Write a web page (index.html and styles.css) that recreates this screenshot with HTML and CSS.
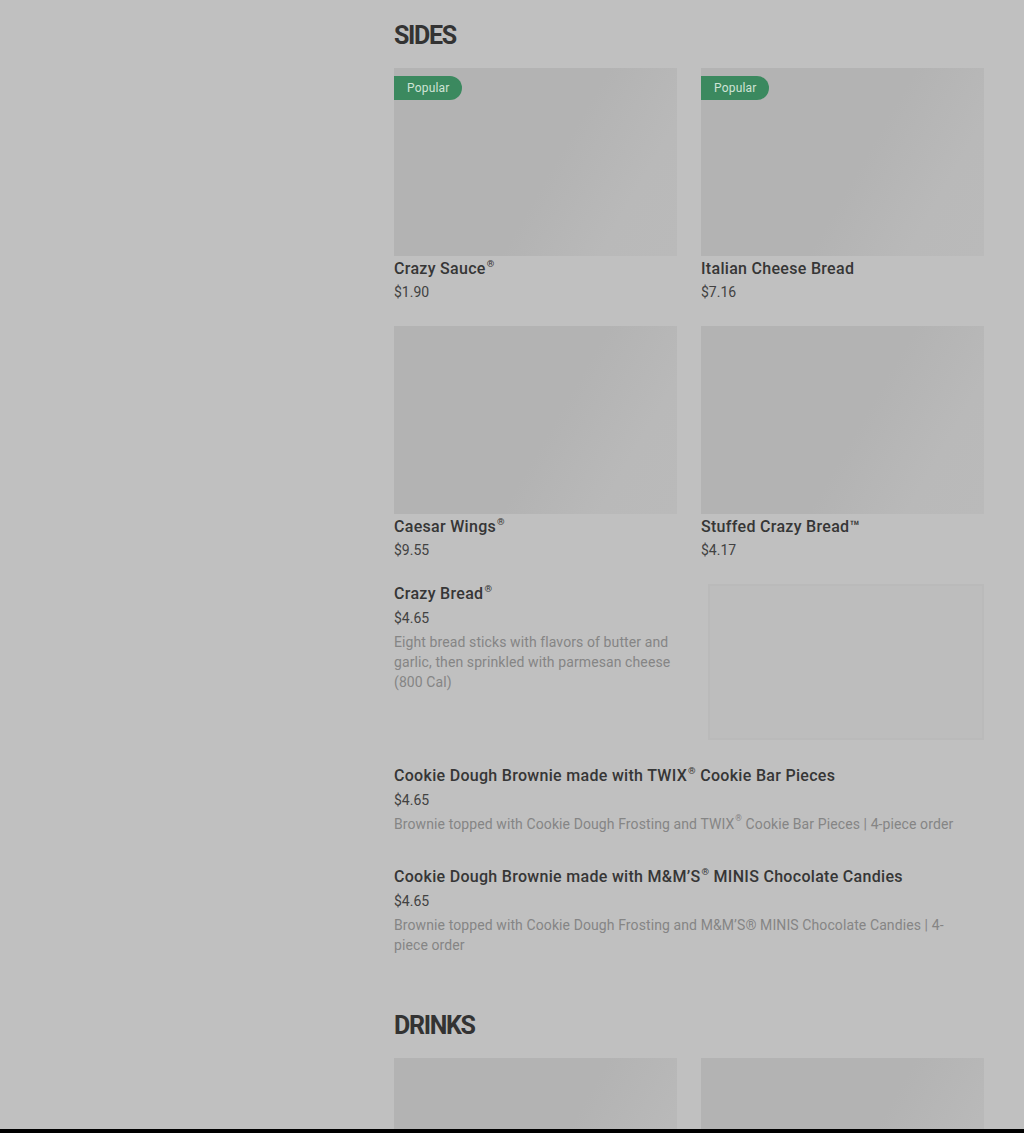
FILE: index.html
```html
<!DOCTYPE html>
<html lang="en">

<head>
    <meta charset="UTF-8">
    <meta name="viewport" content="width=device-width, initial-scale=1">
    <title>Menu</title>
    <link rel="stylesheet" href="styles.css">
</head>

<body>
    <div class="page">
        <main class="menu">

            <!-- Sides -->
            <section class="section">
                <h2 class="section-title">SIDES</h2>
                <div class="grid">
                    <div class="card">
                        <div class="thumb"><span class="badge">Popular</span></div>
                        <div class="item-name">Crazy Sauce<span class="reg">®</span></div>
                        <div class="item-price">$1.90</div>
                    </div>
                    <div class="card">
                        <div class="thumb"><span class="badge">Popular</span></div>
                        <div class="item-name">Italian Cheese Bread</div>
                        <div class="item-price">$7.16</div>
                    </div>
                    <div class="card">
                        <div class="thumb"></div>
                        <div class="item-name">Caesar Wings<span class="reg">®</span></div>
                        <div class="item-price">$9.55</div>
                    </div>
                    <div class="card">
                        <div class="thumb"></div>
                        <div class="item-name">Stuffed Crazy Bread™</div>
                        <div class="item-price">$4.17</div>
                    </div>
                </div>

                <div class="list">
                    <div class="row">
                        <div class="row-text">
                            <div class="item-name">Crazy Bread<span class="reg">®</span></div>
                            <div class="item-price row-price">$4.65</div>
                            <p class="item-desc">Eight bread sticks with flavors of butter and garlic, then sprinkled with parmesan cheese (800 Cal)</p>
                        </div>
                        <div class="row-thumb"></div>
                    </div>
                    <div class="row">
                        <div class="row-text text-only">
                            <div class="item-name">Cookie Dough Brownie made with TWIX<span class="reg">®</span> Cookie Bar Pieces</div>
                            <div class="item-price row-price">$4.65</div>
                            <p class="item-desc">Brownie topped with Cookie Dough Frosting and TWIX<span class="reg">®</span> Cookie Bar Pieces | 4-piece order</p>
                        </div>
                    </div>
                    <div class="row">
                        <div class="row-text text-only">
                            <div class="item-name">Cookie Dough Brownie made with M&amp;M’S<span class="reg">®</span> MINIS Chocolate Candies</div>
                            <div class="item-price row-price">$4.65</div>
                            <p class="item-desc">Brownie topped with Cookie Dough Frosting and M&amp;M’S® MINIS Chocolate Candies | 4-piece order</p>
                        </div>
                    </div>
                </div>
            </section>

            <!-- Drinks -->
            <section class="section">
                <h2 class="section-title">DRINKS</h2>
                <div class="grid">
                    <div class="card">
                        <div class="thumb"></div>
                    </div>
                    <div class="card">
                        <div class="thumb"></div>
                    </div>
                </div>
            </section>

        </main>
    </div>
</body>

</html>
```

FILE: styles.css
```css
* {
    margin: 0;
    padding: 0;
    box-sizing: border-box;
}

body {
    font-family: Roboto, "Liberation Sans", sans-serif;
    background: #000000;
    color: #333333;
}

.page {
    height: 1129px;
    overflow: hidden;
    background: #c0c0c0;
}

.menu {
    width: 590px;
    margin-left: 394px;
    display: flex;
    flex-direction: column;
    gap: 28px;
}

.section-title {
    font-size: 25px;
    line-height: 32px;
    font-weight: 700;
    letter-spacing: -1.3px;
    color: #333333;
    padding-top: 20px;
    margin-bottom: 16px;
}

.grid {
    display: grid;
    grid-template-columns: 1fr 1fr;
    column-gap: 24px;
    row-gap: 24px;
}

.thumb {
    position: relative;
    height: 188px;
    background: linear-gradient(120deg, #b3b3b3 55%, #b9b9b9 80%, #bababa);
    margin-bottom: 3px;
}

.badge {
    position: absolute;
    top: 8px;
    left: 0;
    height: 24px;
    padding: 0 12px 0 13px;
    display: flex;
    align-items: center;
    font-size: 12px;
    letter-spacing: 0.2px;
    color: #cfe3d6;
    background: #3b895f;
    border-radius: 0 12px 12px 0;
}

.item-name {
    font-size: 16px;
    line-height: 20px;
    font-weight: 500;
    letter-spacing: 0.3px;
    color: #363636;
}

.reg {
    font-size: 0.6em;
    line-height: 1;
    vertical-align: top;
    margin-left: 1px;
}

.item-price {
    font-size: 14px;
    line-height: 20px;
    color: #424242;
    margin-top: 3px;
}

.row-price {
    margin-top: 4px;
}

.list {
    margin-top: 24px;
    display: flex;
    flex-direction: column;
    gap: 26px;
}

.row {
    display: flex;
    gap: 24px;
}

.row-text {
    flex: 1;
    padding-bottom: 7px;
}

.text-only {
    padding-right: 20px;
}

.item-desc {
    margin-top: 4px;
    font-size: 14px;
    line-height: 20px;
    letter-spacing: 0.1px;
    color: #858585;
}

.row-thumb {
    flex: 0 0 276px;
    height: 156px;
    background: #bdbdbd;
    border: 2px solid #bababa;
}
```
